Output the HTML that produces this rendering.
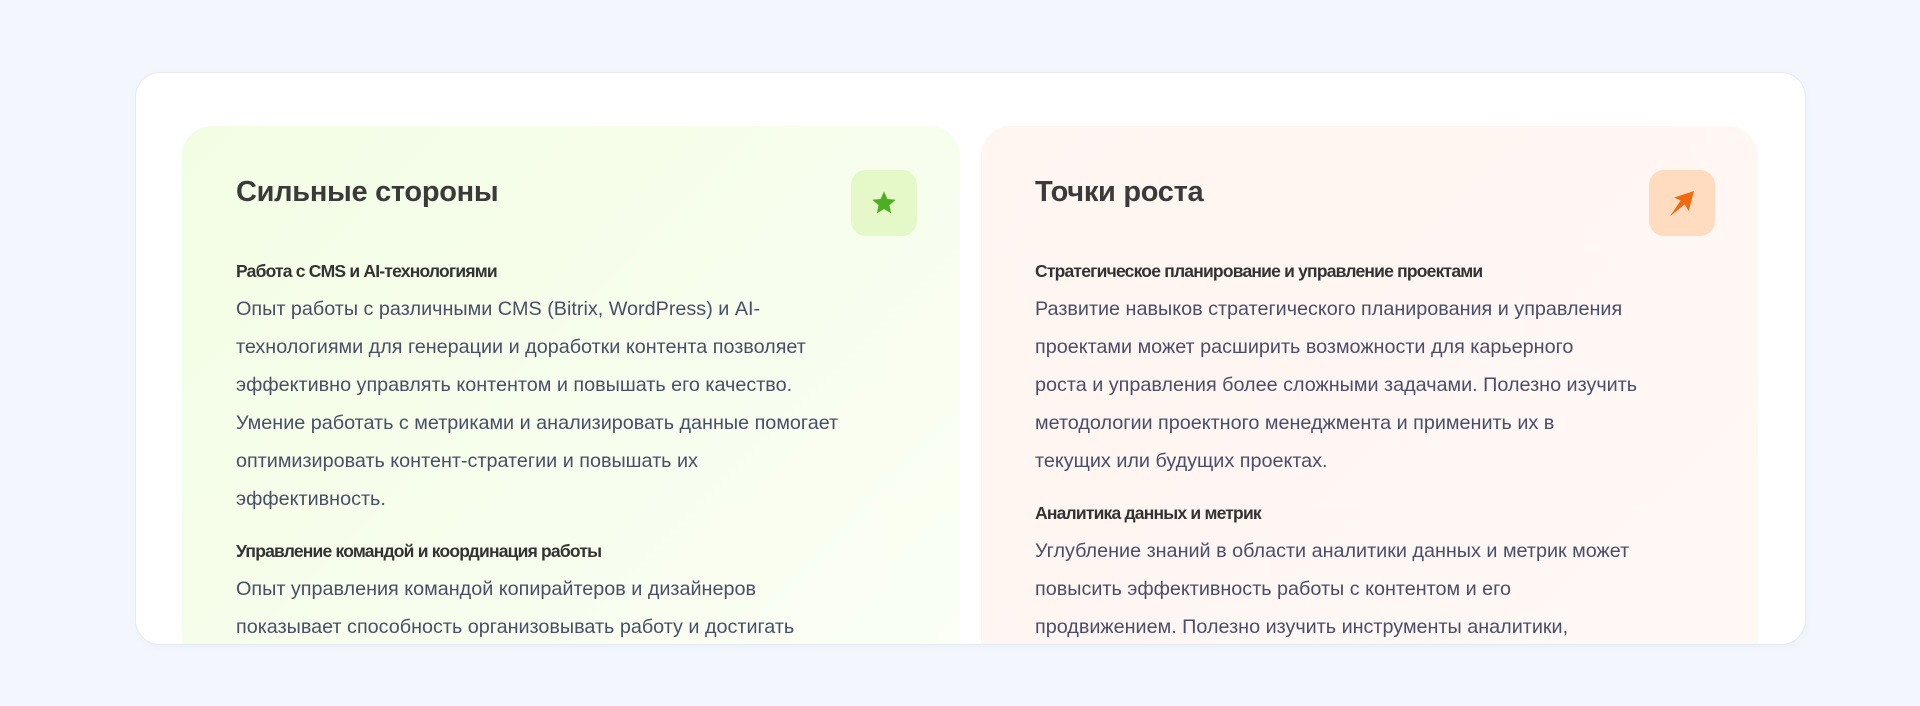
<!DOCTYPE html>
<html><head><meta charset="utf-8"><style>
*{margin:0;padding:0;box-sizing:border-box}
body{width:1920px;height:706px;background:#f3f7fd;font-family:"Liberation Sans",sans-serif;position:relative;overflow:hidden}
.card{position:absolute;left:136px;top:73px;width:1669px;height:571px;background:#fff;border-radius:24px;box-shadow:0 0 0 1px #e6ebf3,0 2px 8px rgba(30,50,90,.05);overflow:hidden}
.panel{position:absolute;top:53px;width:778px;height:560px;border-radius:30px;padding:46px 54px}
.p1{left:46px;background:linear-gradient(135deg,#f3fde4,#fbfff5)}
.p2{left:845px;width:777px;background:linear-gradient(135deg,#fff5f1,#fff8f5)}
h2{font-size:29px;font-weight:bold;color:#3a3a3a;line-height:40px;margin-bottom:40px;letter-spacing:-.3px}
h3{font-size:17.5px;font-weight:bold;color:#333;line-height:38px;white-space:nowrap;letter-spacing:-.8px}
p{font-size:19.8px;color:#4a4e68;line-height:38px;white-space:nowrap;margin-bottom:14px}
.ic{position:absolute;top:44px;right:43px;width:66px;height:66px;border-radius:15px;display:flex;align-items:center;justify-content:center}
</style></head><body>
<div class="card">
<div class="panel p1">
<div class="ic" style="background:#e5f8c8"><svg width="28" height="28" viewBox="0 0 24 24"><path d="M12 2l2.9 6.6 7.1.6-5.4 4.7 1.6 7-6.2-3.7-6.2 3.7 1.6-7L2 9.2l7.1-.6z" fill="#4caf22"/></svg></div>
<h2>Сильные стороны</h2>
<h3>Работа с CMS и AI-технологиями</h3>
<p>Опыт работы с различными CMS (Bitrix, WordPress) и AI-<br>технологиями для генерации и доработки контента позволяет<br>эффективно управлять контентом и повышать его качество.<br>Умение работать с метриками и анализировать данные помогает<br>оптимизировать контент-стратегии и повышать их<br>эффективность.</p>
<h3>Управление командой и координация работы</h3>
<p>Опыт управления командой копирайтеров и дизайнеров<br>показывает способность организовывать работу и достигать</p>
</div>
<div class="panel p2">
<div class="ic" style="background:#ffdcc0"><svg width="32" height="32" viewBox="0 0 24 24"><path d="M3 22L11 10 6 8 21 3 17 18 14 13z" fill="#f26a10"/></svg></div>
<h2>Точки роста</h2>
<h3>Стратегическое планирование и управление проектами</h3>
<p>Развитие навыков стратегического планирования и управления<br>проектами может расширить возможности для карьерного<br>роста и управления более сложными задачами. Полезно изучить<br>методологии проектного менеджмента и применить их в<br>текущих или будущих проектах.</p>
<h3>Аналитика данных и метрик</h3>
<p>Углубление знаний в области аналитики данных и метрик может<br>повысить эффективность работы с контентом и его<br>продвижением. Полезно изучить инструменты аналитики,</p>
</div>
</div>
</body></html>
